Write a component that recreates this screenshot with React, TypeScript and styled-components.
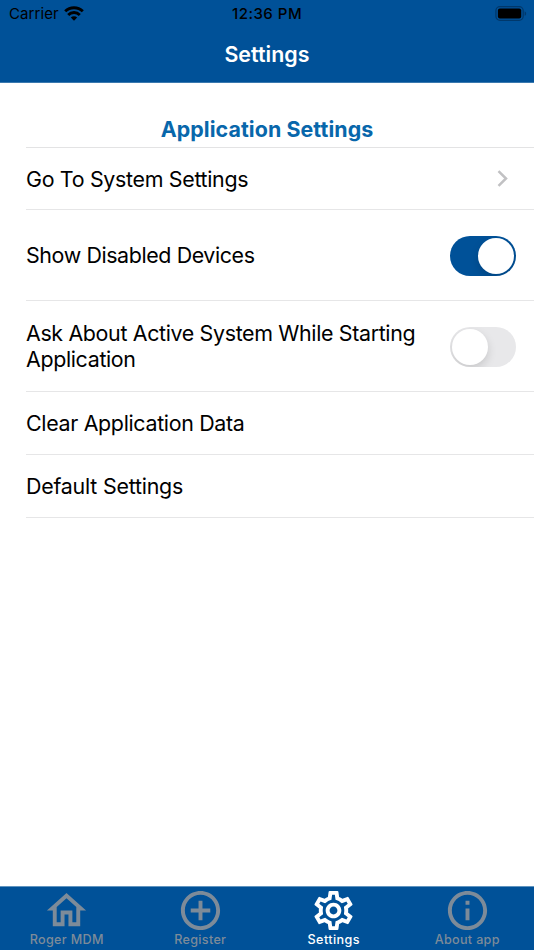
import React from "react";
import styled, { createGlobalStyle } from "styled-components";
import { MdAddCircleOutline, MdInfoOutline, MdOutlineHome, MdOutlineSettings } from "react-icons/md";

const GlobalStyle = createGlobalStyle`
  * { box-sizing: border-box; }
  body { margin: 0; background: #fff; font-family: Inter, "Liberation Sans", sans-serif; }
`;

const Screen = styled.div`
  width: 534px;
  height: 950px;
  display: flex;
  flex-direction: column;
  background: #fff;
  overflow: hidden;
`;

const Header = styled.header`
  height: 83px;
  flex: none;
  background: #005198;
  border-bottom: 1px solid #3a79af;
`;

const StatusBar = styled.div`
  height: 27px;
  display: grid;
  grid-template-columns: 1fr auto 1fr;
  align-items: center;
  padding: 0 7px 0 9px;
  color: #000;
  font-size: 15px;
  line-height: 27px;
`;

const Carrier = styled.div`
  display: flex;
  align-items: center;
  gap: 5px;
  letter-spacing: 0.1px;
  svg { display: block; margin-top: -1px; }
`;

const Clock = styled.div`
  font-weight: 500;
  letter-spacing: 0.5px;
  margin-right: 2px;
`;

const Battery = styled.div`
  justify-self: end;
  svg { display: block; margin-top: -1px; }
`;

const Title = styled.h1`
  margin: 0;
  height: 55px;
  line-height: 55px;
  text-align: center;
  color: #fff;
  font-size: 21.4px;
  font-weight: 600;
  letter-spacing: 0.05px;
`;

const Content = styled.main`
  flex: 1;
  padding-left: 26px;
`;

const SectionTitle = styled.h2`
  margin: 0;
  height: 65px;
  padding: 33px 26px 0 0;
  border-bottom: 1px solid #e3e3e4;
  text-align: center;
  color: #0867ab;
  font-size: 21.4px;
  line-height: 27px;
  font-weight: 700;
  letter-spacing: 0.08px;
`;

const Row = styled.div<{ $height: number }>`
  height: ${(p) => p.$height}px;
  padding-right: 18px;
  display: flex;
  align-items: center;
  justify-content: space-between;
  border-bottom: 1px solid #e6e6e7;
`;

const Label = styled.span<{ $tracking: number }>`
  color: #000;
  font-size: 21.4px;
  line-height: 26px;
  white-space: pre-line;
  letter-spacing: ${(p) => p.$tracking}px;
`;

const Track = styled.span<{ $on?: boolean }>`
  width: 66px;
  height: 40px;
  flex: none;
  margin-top: 1.4px;
  display: flex;
  justify-content: ${(p) => (p.$on ? "flex-end" : "flex-start")};
  padding: 2px;
  border-radius: 20px;
  overflow: hidden;
  background: ${(p) => (p.$on ? "#005198" : "#e8e8ea")};
`;

const Thumb = styled.span`
  width: 36px;
  height: 36px;
  border-radius: 50%;
  background: #fff;
  box-shadow: 0 4px 10px rgba(0, 0, 0, 0.14);
`;

const Chevron = styled.svg`
  margin-right: 8px;
  display: block;
`;

const TabBar = styled.nav`
  height: 64px;
  flex: none;
  display: grid;
  grid-template-columns: repeat(4, 1fr);
  background: #005198;
  border-top: 1px solid #6094bf;
`;

const Tab = styled.div<{ $active?: boolean }>`
  display: flex;
  flex-direction: column;
  align-items: center;
  padding-top: 0.4px;
  color: ${(p) => (p.$active ? "#fff" : "#7d8b99")};
  svg { display: block; width: 47px; height: 47px; flex: none; }
`;

const TabLabel = styled.span<{ $tracking: number }>`
  margin-top: -2px;
  font-size: 12.6px;
  line-height: 16px;
  font-weight: 500;
  letter-spacing: ${(p) => p.$tracking}px;
  white-space: nowrap;
`;

const rows = [
  { text: "Go To System Settings", height: 62, tracking: -0.31, kind: "link" },
  { text: "Show Disabled Devices", height: 91, tracking: -0.39, kind: "on" },
  { text: "Ask About Active System While Starting\nApplication", height: 91, tracking: -0.34, kind: "off" },
  { text: "Clear Application Data", height: 63, tracking: -0.32, kind: "plain" },
  { text: "Default Settings", height: 63, tracking: -0.22, kind: "plain" },
];

const tabs = [
  { text: "Roger MDM", Icon: MdOutlineHome, tracking: 0.34 },
  { text: "Register", Icon: MdAddCircleOutline, tracking: 0.32 },
  { text: "Settings", Icon: MdOutlineSettings, tracking: 0.42, active: true },
  { text: "About app", Icon: MdInfoOutline, tracking: 0.32 },
];

export default function App() {
  return (
    <>
      <GlobalStyle />
      <Screen>
        <Header>
          <StatusBar>
            <Carrier>
              Carrier
              <svg width="20" height="15" viewBox="0 0 20 15" fill="none" stroke="#000" strokeWidth="2.9">
                <path d="M1.2 5.3a12.6 12.6 0 0 1 17.6 0" />
                <path d="M4.2 8.9a8.2 8.2 0 0 1 11.6 0" />
                <path d="M10 14.8 6.8 11.6a4.5 4.5 0 0 1 6.4 0Z" fill="#000" stroke="none" />
              </svg>
            </Carrier>
            <Clock>12:36 PM</Clock>
            <Battery>
              <svg width="32" height="15" viewBox="0 0 32 15">
                <rect x="0.9" y="0.7" width="27.3" height="13.6" rx="4" fill="none" stroke="#00386b" strokeWidth="1.3" />
                <rect x="2.9" y="2.6" width="23.3" height="9.8" rx="2" fill="#000" />
                <path d="M29.6 5.2c2 .8 2 3.8 0 4.6Z" fill="#00386b" />
              </svg>
            </Battery>
          </StatusBar>
          <Title>Settings</Title>
        </Header>
        <Content>
          <SectionTitle>Application Settings</SectionTitle>
          {rows.map((row) => (
            <Row key={row.text} $height={row.height}>
              <Label $tracking={row.tracking}>{row.text}</Label>
              {row.kind === "link" && (
                <Chevron width="11" height="17" viewBox="0 0 11 17" fill="none" stroke="#c1c1c3" strokeWidth="2.5">
                  <path d="M1.5 1.2 9 8.5 1.5 15.8" />
                </Chevron>
              )}
              {(row.kind === "on" || row.kind === "off") && (
                <Track $on={row.kind === "on"}>
                  <Thumb />
                </Track>
              )}
            </Row>
          ))}
        </Content>
        <TabBar>
          {tabs.map(({ text, Icon, tracking, active }) => (
            <Tab key={text} $active={active}>
              <Icon />
              <TabLabel $tracking={tracking}>{text}</TabLabel>
            </Tab>
          ))}
        </TabBar>
      </Screen>
    </>
  );
}
